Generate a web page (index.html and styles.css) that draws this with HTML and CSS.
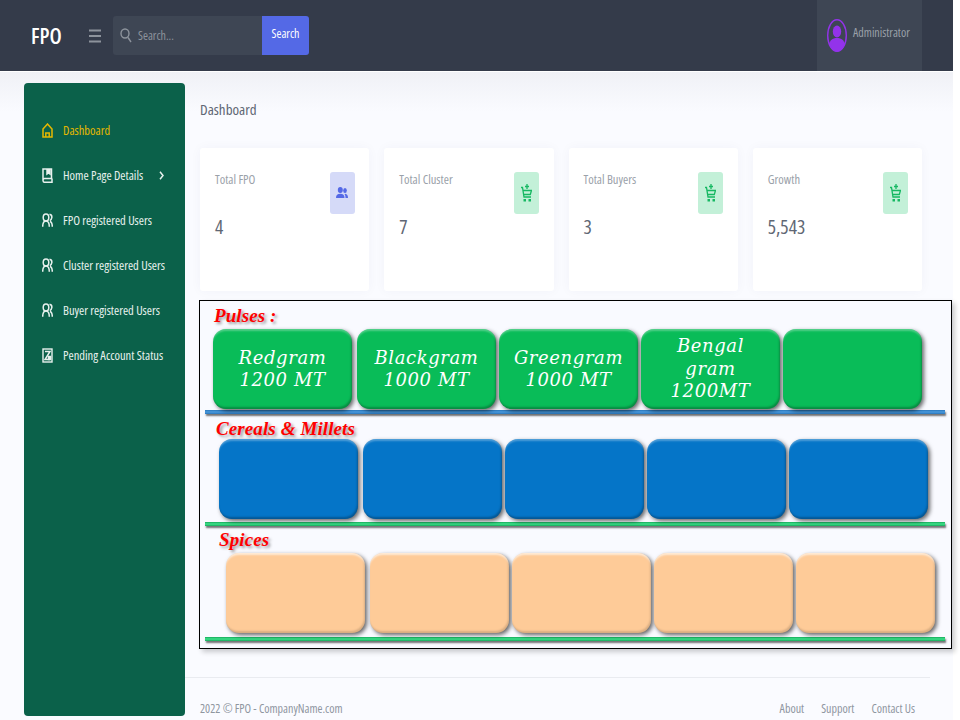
FILE: index.html
```html
<!DOCTYPE html>
<html>
<head>
    <meta charset="UTF-8">
    <meta name="viewport" content="width=device-width, initial-scale=1.0">
    <title>FPO Dashboard</title>
    <link rel="stylesheet" href="styles.css">
</head>
<body>
    <div class="app">
        <header class="topbar">
            <div class="brand">FPO</div>
            <svg class="burger" width="12" height="14" viewBox="0 0 12 14"><path d="M0 1.500h12M0 7h12M0 12.500h12" stroke="#8d939c" stroke-width="2"/></svg>
            <div class="search">
                <div class="search-field">
                    <svg width="12" height="15" viewBox="0 0 12 15" fill="none" stroke="#8d939c" stroke-width="1.400"><ellipse cx="5" cy="5.500" rx="4" ry="4.500"/><path d="M8 9.500l3 4.500"/></svg>
                    <span>Search...</span>
                </div>
                <button class="search-btn">Search</button>
            </div>
            <div class="user">
                <svg width="20" height="33" viewBox="0 0 20 33"><ellipse cx="10" cy="16.500" rx="9.300" ry="15.800" fill="none" stroke="#9333ea" stroke-width="1.400"/><ellipse cx="10" cy="12.500" rx="4.200" ry="6" fill="#9333ea"/><path d="M2.500 26c0-5 3-7 7.500-7s7.500 2 7.500 7c-1.500 4-4.500 6.500-7.500 6.500s-6-2.500-7.500-6.500z" fill="#9333ea"/></svg>
                <span>Administrator</span>
            </div>
        </header>

        <div class="layout">
            <nav class="sidebar">
                <a class="nav-item active">
                    <svg width="11" height="15" viewBox="0 0 11 15" fill="none" stroke="currentColor" stroke-width="1.500"><path d="M1 6L5.500 1 10 6v8H1z"/><path d="M3.800 14v-4h3.400v4"/></svg>
                    <span>Dashboard</span>
                </a>
                <a class="nav-item">
                    <svg width="11" height="15" viewBox="0 0 11 15" fill="none" stroke="currentColor" stroke-width="1.500"><path d="M1 1h8.500v9.500H2.500A1.500 2 0 0 0 1 12.500zM1 12.500A1.500 2 0 0 0 2.500 14.300h7.500v-3.800"/><path d="M5 1v5l1.500-1L8 6V1" fill="currentColor"/></svg>
                    <span>Home Page Details</span>
                    <svg class="chevron" width="5" height="9" viewBox="0 0 5 9" fill="none" stroke="currentColor" stroke-width="1.500"><path d="M1 .8l3 3.700-3 3.700"/></svg>
                </a>
                <a class="nav-item">
                    <svg width="11" height="15" viewBox="0 0 11 15" fill="none" stroke="currentColor" stroke-width="1.500"><ellipse cx="4" cy="4.500" rx="2.800" ry="3.500"/><path d="M.7 13.800c0-3.500 1-5.800 3.300-5.800s3.300 2.300 3.300 5.800M7.500 1.200c1.800.3 2.500 2 2.300 3.500-.2 1.300-.8 2.500-2 3M8 8.500c1.600.5 2.300 2.700 2.300 5.300"/></svg>
                    <span>FPO registered Users</span>
                </a>
                <a class="nav-item">
                    <svg width="11" height="15" viewBox="0 0 11 15" fill="none" stroke="currentColor" stroke-width="1.500"><ellipse cx="4" cy="4.500" rx="2.800" ry="3.500"/><path d="M.7 13.800c0-3.500 1-5.800 3.300-5.800s3.300 2.300 3.300 5.800M7.500 1.200c1.800.3 2.500 2 2.300 3.500-.2 1.300-.8 2.500-2 3M8 8.500c1.600.5 2.300 2.700 2.300 5.300"/></svg>
                    <span>Cluster registered Users</span>
                </a>
                <a class="nav-item">
                    <svg width="11" height="15" viewBox="0 0 11 15" fill="none" stroke="currentColor" stroke-width="1.500"><ellipse cx="4" cy="4.500" rx="2.800" ry="3.500"/><path d="M.7 13.800c0-3.500 1-5.800 3.300-5.800s3.300 2.300 3.300 5.800M7.500 1.200c1.800.3 2.500 2 2.300 3.500-.2 1.300-.8 2.500-2 3M8 8.500c1.600.5 2.300 2.700 2.300 5.300"/></svg>
                    <span>Buyer registered Users</span>
                </a>
                <a class="nav-item">
                    <svg width="11" height="15" viewBox="0 0 11 15" fill="none" stroke="currentColor" stroke-width="1.400"><rect x="1" y="1" width="9" height="13"/><path d="M3 3.500h5L3 11.500h5" stroke-width="1.500"/><path d="M6.500 8.500h2v3h-2z" fill="currentColor"/></svg>
                    <span>Pending Account Status</span>
                </a>
            </nav>

            <main class="content">
                <h1 class="page-title">Dashboard</h1>

                <div class="stats">
                    <div class="stat">
                        <div>
                            <div class="stat-label">Total FPO</div>
                            <div class="stat-value">4</div>
                        </div>
                        <div class="stat-icon blue">
                            <svg width="12" height="14" viewBox="0 0 12 14" fill="currentColor"><ellipse cx="4.300" cy="4" rx="2.500" ry="3"/><path d="M0 12c0-3 1.500-4.300 4.300-4.300S8.500 9 8.500 12z"/><ellipse cx="9" cy="4.500" rx="1.800" ry="2.500"/><path d="M9.300 7.800c1.800.2 2.700 1.700 2.700 4.200H9.500c0-1.700-.2-3-1-3.800z"/></svg>
                        </div>
                    </div>
                    <div class="stat">
                        <div>
                            <div class="stat-label">Total Cluster</div>
                            <div class="stat-value">7</div>
                        </div>
                        <div class="stat-icon green">
                            <svg width="11" height="18" viewBox="0 0 11 18" fill="none" stroke="currentColor" stroke-width="1.300"><path d="M0 3.500h1.500L3 13h7"/><path d="M2 6.500h8.500L9.300 10.500H2.700"/><path d="M6 0v5M4 2.500h4"/><rect x="2.500" y="15" width="2.500" height="2.500" fill="currentColor" stroke="none"/><rect x="7.500" y="15" width="2.500" height="2.500" fill="currentColor" stroke="none"/></svg>
                        </div>
                    </div>
                    <div class="stat">
                        <div>
                            <div class="stat-label">Total Buyers</div>
                            <div class="stat-value">3</div>
                        </div>
                        <div class="stat-icon green">
                            <svg width="11" height="18" viewBox="0 0 11 18" fill="none" stroke="currentColor" stroke-width="1.300"><path d="M0 3.500h1.500L3 13h7"/><path d="M2 6.500h8.500L9.300 10.500H2.700"/><path d="M6 0v5M4 2.500h4"/><rect x="2.500" y="15" width="2.500" height="2.500" fill="currentColor" stroke="none"/><rect x="7.500" y="15" width="2.500" height="2.500" fill="currentColor" stroke="none"/></svg>
                        </div>
                    </div>
                    <div class="stat">
                        <div>
                            <div class="stat-label">Growth</div>
                            <div class="stat-value">5,543</div>
                        </div>
                        <div class="stat-icon green">
                            <svg width="11" height="18" viewBox="0 0 11 18" fill="none" stroke="currentColor" stroke-width="1.300"><path d="M0 3.500h1.500L3 13h7"/><path d="M2 6.500h8.500L9.300 10.500H2.700"/><path d="M6 0v5M4 2.500h4"/><rect x="2.500" y="15" width="2.500" height="2.500" fill="currentColor" stroke="none"/><rect x="7.500" y="15" width="2.500" height="2.500" fill="currentColor" stroke="none"/></svg>
                        </div>
                    </div>
                </div>

                <section class="panel">
                    <h2 class="shelf-title pulses-title">Pulses :</h2>
                    <div class="tiles tiles-green">
                        <div class="tile"><p>Redgram<br>1200 MT</p></div>
                        <div class="tile"><p>Blackgram<br>1000 MT</p></div>
                        <div class="tile"><p>Greengram<br>1000 MT</p></div>
                        <div class="tile"><p>Bengal<br>gram<br>1200MT</p></div>
                        <div class="tile"></div>
                    </div>
                    <div class="rule rule-blue"></div>

                    <h2 class="shelf-title cereals-title">Cereals &amp; Millets</h2>
                    <div class="tiles tiles-blue">
                        <div class="tile"></div>
                        <div class="tile"></div>
                        <div class="tile"></div>
                        <div class="tile"></div>
                        <div class="tile"></div>
                    </div>
                    <div class="rule rule-green rule-mid"></div>

                    <h2 class="shelf-title spices-title">Spices</h2>
                    <div class="tiles tiles-peach">
                        <div class="tile"></div>
                        <div class="tile"></div>
                        <div class="tile"></div>
                        <div class="tile"></div>
                        <div class="tile"></div>
                    </div>
                    <div class="rule rule-green rule-end"></div>
                </section>

                <footer class="footer">
                    <span>2022 © FPO - CompanyName.com</span>
                    <div class="footer-links">
                        <a>About</a>
                        <a>Support</a>
                        <a>Contact Us</a>
                    </div>
                </footer>
            </main>
        </div>
    </div>
</body>
</html>
```

FILE: styles.css
```css
html, body {
    margin: 0;
    padding: 0;
    height: 720px;
    overflow: hidden;
    background-color: #fff;
}

body {
    font-family: "Open Sans", "Liberation Sans", sans-serif;
    font-stretch: 75%;
    font-size: 12.500px;
}

.app {
    width: 953px;
    height: 720px;
    background-color: #fafbff;
}

/* top bar */
.topbar {
    height: 72px;
    display: flex;
    align-items: center;
    background-color: #343b4a;
    border-bottom: 1px solid #fff;
    box-sizing: border-box;
}

.brand {
    margin-left: 31px;
    width: 58px;
    color: #fff;
    font-size: 21.500px;
    font-weight: 600;
}

.burger {
    margin-right: 12px;
}

.search {
    display: flex;
    width: 196px;
    height: 39px;
    margin-bottom: 1px;
    border-radius: 3px;
    overflow: hidden;
    font-size: 12px;
}

.search-field {
    flex: 1;
    display: flex;
    align-items: center;
    gap: 6px;
    padding-left: 7px;
    background-color: #3e4654;
    color: #8d939c;
}

.search-btn {
    width: 47px;
    border: none;
    padding: 0 0 3px;
    background-color: #5469e6;
    color: #fff;
    font: inherit;
    font-stretch: 75%;
}

.user {
    margin-left: auto;
    margin-right: 31px;
    width: 95px;
    height: 71px;
    padding-left: 10px;
    display: flex;
    align-items: center;
    gap: 6px;
    background-color: #3e4654;
    color: #9aa0a9;
    font-size: 12px;
}

.user span {
    margin-bottom: 6px;
}

/* sidebar + content */
.layout {
    display: flex;
    background: linear-gradient(#f0f1f6, #fafbff 40px);
}

.sidebar {
    width: 161px;
    height: 633px;
    margin: 11px 0 4px 24px;
    padding-top: 25px;
    box-sizing: border-box;
    border-radius: 4px;
    background-color: #0b614a;
}

.nav-item {
    height: 45px;
    padding-left: 18px;
    display: flex;
    align-items: center;
    gap: 10px;
    color: #e8f1ee;
}

.nav-item.active {
    color: #e6b800;
}

.chevron {
    margin-left: auto;
    margin-right: 21px;
}

.content {
    width: 745px;
    padding-left: 15px;
}

.page-title {
    margin: 27px 0 29px;
    height: 20px;
    line-height: 20px;
    font-size: 15px;
    font-weight: 500;
    color: #5f6774;
}

.stats {
    display: grid;
    grid-template-columns: repeat(4, 169.250px);
    column-gap: 15px;
}

.stat {
    height: 143px;
    padding: 24px 14.500px 0 15px;
    box-sizing: border-box;
    display: flex;
    justify-content: space-between;
    align-items: flex-start;
    border-radius: 3px;
    background-color: #fff;
    box-shadow: 0 0 12px rgba(40, 50, 90, 0.04);
}

.stat-label {
    color: #9aa1a9;
    line-height: 16px;
}

.stat-value {
    margin-top: 25px;
    font-size: 19.500px;
    font-weight: 500;
    color: #5f6774;
}

.stat-icon {
    width: 25px;
    height: 42px;
    display: flex;
    align-items: center;
    justify-content: center;
    border-radius: 3px;
}

.stat-icon.blue {
    background-color: #d5daf8;
    color: #5469e6;
}

.stat-icon.green {
    background-color: #c3f0d8;
    color: #16b862;
}

/* shelves panel */
.panel {
    width: 753px;
    height: 349px;
    margin: 9px 0 0 -1px;
    box-sizing: border-box;
    border: 1px solid #000;
    background-color: #f9faff;
    box-shadow: 3px 3px 5px rgba(0, 0, 0, 0.2);
}

.shelf-title {
    margin: 0;
    height: 20px;
    line-height: 20px;
    font-family: "Liberation Serif", serif;
    font-stretch: normal;
    font-size: 19px;
    font-style: italic;
    font-weight: bold;
    letter-spacing: 0.100px;
    color: #f00;
    text-shadow: 2px 2px 3px rgba(0, 0, 0, 0.4);
}

.pulses-title {
    margin-top: 5px;
    padding-left: 14px;
}

.cereals-title {
    margin-top: 5px;
    padding-left: 16px;
}

.spices-title {
    margin-top: 4px;
    padding-left: 19px;
}

.tiles {
    display: grid;
    grid-template-columns: 141px repeat(4, 139px);
    column-gap: 3px;
    height: 80px;
}

.tiles-green {
    margin-top: 3px;
    padding-left: 13px;
}

.tiles-blue {
    padding-left: 19px;
}

.tiles-peach {
    margin-top: 3px;
    padding-left: 26px;
}

.tile {
    display: flex;
    align-items: center;
    justify-content: center;
    text-align: center;
    border-radius: 13px;
    font-family: "DejaVu Serif", "Liberation Serif", serif;
    font-stretch: normal;
    font-style: italic;
    font-size: 18px;
    line-height: 22.500px;
    letter-spacing: 0.600px;
    color: #fff;
}

.tile:first-child {
    margin-right: 2px;
}

.tile p {
    margin: 0;
}

.tiles-green .tile {
    background-color: #09bc58;
    box-shadow: 2px 2px 4px rgba(0, 0, 0, 0.6), inset 0 3px 2px -1px rgba(255, 255, 255, 0.3), inset -1px -2px 2px rgba(0, 0, 0, 0.25);
}

.tiles-blue .tile {
    background-color: #0575c8;
    box-shadow: 2px 2px 4px rgba(0, 0, 0, 0.6), inset 0 3px 2px -1px rgba(255, 255, 255, 0.3), inset -1px -2px 2px rgba(0, 0, 0, 0.25);
}

.tiles-peach .tile {
    background-color: #fecb98;
    box-shadow: 2px 2px 4px rgba(0, 0, 0, 0.6), inset 0 3px 2px -1px rgba(255, 255, 255, 0.6), inset -1px -2px 2px rgba(0, 0, 0, 0.15);
}

.rule {
    width: 740px;
    height: 4px;
    margin: 1px 0 0 5px;
    box-shadow: 1px 2px 2px rgba(0, 0, 0, 0.55);
}

.rule-blue {
    background: linear-gradient(#2a76bb, #4a9ade 50%, #2a76bb);
}

.rule-green {
    background: linear-gradient(#17a85a, #3de48c 50%, #17a85a);
}

.rule-mid {
    margin-top: 3px;
}

.rule-end {
    margin-top: 4px;
}

/* footer */
.footer {
    width: 715px;
    margin: 28px 0 0 -15px;
    padding: 22px 15px 0;
    display: flex;
    justify-content: space-between;
    border-top: 1px solid #e9ebf0;
    color: #8f969f;
    font-size: 12px;
}

.footer-links {
    display: flex;
    gap: 17px;
}
```
